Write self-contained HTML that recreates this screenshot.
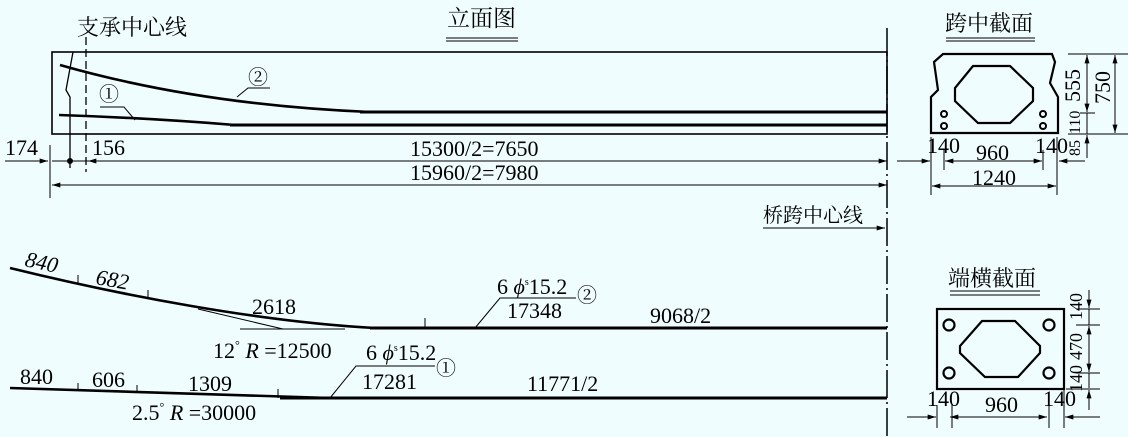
<!DOCTYPE html>
<html><head><meta charset="utf-8"><style>
html,body{margin:0;padding:0;background:#f0fdfe;}
svg{display:block}
text{font-family:"Liberation Serif","Noto Serif CJK SC",serif;fill:#000}
.cjk{font-family:"Liberation Serif","Noto Serif CJK SC",serif}
</style></head><body>
<svg width="1128" height="437" viewBox="0 0 1128 437" xmlns="http://www.w3.org/2000/svg">
<defs>
<marker id="ar" viewBox="0 0 10 6" refX="10" refY="3" markerWidth="12" markerHeight="5" orient="auto-start-reverse" markerUnits="userSpaceOnUse"><path d="M0,0 L10,3 L0,6 Z" fill="#000"/></marker>
</defs>
<g stroke="#000" fill="none">
<line x1="887" y1="28" x2="887" y2="437" stroke-width="1.5" stroke-dasharray="28,4,2,4"/>
<rect x="52" y="52" width="835" height="82" stroke-width="1.6"/>
<line x1="360" y1="112" x2="887" y2="112" stroke-width="3"/>
<line x1="230" y1="125" x2="887" y2="125" stroke-width="3"/>
<path d="M60,65 Q200,105 370,112" stroke-width="2.6"/>
<path d="M59,115 Q150,118 235,125" stroke-width="2.6"/>
<path d="M73,52 L66,90 L70,97 L70,168" stroke-width="1.3"/>
<line x1="86" y1="37" x2="86" y2="172" stroke-width="1.3" stroke-dasharray="8,4"/>
<path d="M237,97 L248,88 L270,88" stroke-width="1"/>
<path d="M100,107 L124,107 L135,120" stroke-width="1"/>
<line x1="5" y1="161" x2="48" y2="161" stroke-width="1" marker-end="url(#ar)"/>
<line x1="52" y1="161" x2="887" y2="161" stroke-width="1" marker-end="url(#ar)"/>
<line x1="100" y1="161" x2="88" y2="161" stroke-width="1" marker-end="url(#ar)"/>
<line x1="50" y1="145" x2="50" y2="198" stroke-width="1"/>
<line x1="52" y1="185" x2="887" y2="185" stroke-width="1" marker-start="url(#ar)" marker-end="url(#ar)"/>
<circle cx="70" cy="161" r="2.5" fill="#000"/>
<line x1="763" y1="228" x2="885" y2="228" stroke-width="1" marker-end="url(#ar)"/>
<line x1="446" y1="38" x2="518" y2="38" stroke-width="1"/>
<line x1="446" y1="41" x2="518" y2="41" stroke-width="1"/>
<path d="M10,268 C120,295 260,322 375,328" stroke-width="2.6"/>
<line x1="370" y1="328" x2="887" y2="328" stroke-width="3"/>
<line x1="78" y1="275" x2="78" y2="283" stroke-width="1"/>
<line x1="148" y1="290" x2="148" y2="299" stroke-width="1"/>
<line x1="425" y1="318" x2="425" y2="328" stroke-width="1"/>
<line x1="240" y1="329" x2="345" y2="329" stroke-width="1"/>
<line x1="198" y1="309" x2="283" y2="329" stroke-width="1"/>
<path d="M475,328 L500,298 L576,298" stroke-width="1"/>
<path d="M10,388 Q180,393 330,398" stroke-width="2.6"/>
<line x1="280" y1="398" x2="887" y2="398" stroke-width="3"/>
<line x1="78" y1="383" x2="78" y2="390" stroke-width="1"/>
<line x1="137" y1="385" x2="137" y2="393" stroke-width="1"/>
<line x1="278" y1="389" x2="278" y2="398" stroke-width="1"/>
<path d="M330,398 L356,366 L435,366" stroke-width="1"/>
<line x1="946" y1="38" x2="1035" y2="38" stroke-width="1"/>
<line x1="946" y1="41" x2="1035" y2="41" stroke-width="1"/>
<path d="M934,62 L943,54 L1052,54 L1055,62 L1050,83 L1058,97 L1058,133 L931,133 L931,97 L938,90 Z" stroke-width="2.2"/>
<path d="M973,66 L1010,66 L1033,88 L1033,101 L1010,123 L978,123 L955,101 L955,88 Z" stroke-width="2.2"/>
<circle cx="944" cy="114" r="3" stroke-width="2"/><circle cx="944" cy="126" r="3" stroke-width="2"/>
<circle cx="1043" cy="114" r="3" stroke-width="2"/><circle cx="1043" cy="126" r="3" stroke-width="2"/>
<line x1="1068" y1="54" x2="1128" y2="54" stroke-width="1"/>
<line x1="1068" y1="134" x2="1128" y2="134" stroke-width="1"/>
<line x1="1080" y1="113" x2="1095" y2="113" stroke-width="1"/>
<line x1="1087" y1="55" x2="1087" y2="112" stroke-width="1" marker-start="url(#ar)" marker-end="url(#ar)"/>
<line x1="1087" y1="113" x2="1087" y2="134" stroke-width="1"/>
<line x1="1087" y1="158" x2="1087" y2="135" stroke-width="1" marker-end="url(#ar)"/>
<line x1="1115" y1="55" x2="1115" y2="133" stroke-width="1" marker-start="url(#ar)" marker-end="url(#ar)"/>
<line x1="897" y1="161" x2="930" y2="161" stroke-width="1" marker-end="url(#ar)"/>
<line x1="945" y1="161" x2="1042" y2="161" stroke-width="1" marker-start="url(#ar)" marker-end="url(#ar)"/>
<line x1="1085" y1="161" x2="1059" y2="161" stroke-width="1" marker-end="url(#ar)"/>
<line x1="931" y1="137" x2="931" y2="195" stroke-width="1"/>
<line x1="944" y1="150" x2="944" y2="170" stroke-width="1"/>
<line x1="1043" y1="150" x2="1043" y2="170" stroke-width="1"/>
<line x1="1057" y1="137" x2="1057" y2="195" stroke-width="1"/>
<line x1="932" y1="186" x2="1056" y2="186" stroke-width="1" marker-start="url(#ar)" marker-end="url(#ar)"/>
<line x1="950" y1="291" x2="1040" y2="291" stroke-width="1"/>
<line x1="950" y1="295" x2="1040" y2="295" stroke-width="1"/>
<rect x="937" y="309" width="127" height="80" stroke-width="2.2"/>
<path d="M982,321 L1015,321 L1040,346 L1040,353 L1018,377 L985,377 L960,353 L960,346 Z" stroke-width="2.2"/>
<circle cx="949" cy="325" r="5.5" stroke-width="2.2"/><circle cx="1049" cy="325" r="5.5" stroke-width="2.2"/>
<circle cx="949" cy="373" r="5.5" stroke-width="2.2"/><circle cx="1049" cy="373" r="5.5" stroke-width="2.2"/>
<line x1="1089" y1="290" x2="1089" y2="308" stroke-width="1" marker-end="url(#ar)"/>
<line x1="1089" y1="309" x2="1089" y2="325" stroke-width="1"/>
<line x1="1089" y1="326" x2="1089" y2="372" stroke-width="1" marker-start="url(#ar)" marker-end="url(#ar)"/>
<line x1="1089" y1="373" x2="1089" y2="388" stroke-width="1"/>
<line x1="1089" y1="410" x2="1089" y2="390" stroke-width="1" marker-end="url(#ar)"/>
<line x1="1076" y1="309" x2="1100" y2="309" stroke-width="1"/>
<line x1="1076" y1="325" x2="1100" y2="325" stroke-width="1"/>
<line x1="1076" y1="373" x2="1100" y2="373" stroke-width="1"/>
<line x1="1066" y1="389" x2="1100" y2="389" stroke-width="1"/>
<line x1="907" y1="417" x2="936" y2="417" stroke-width="1" marker-end="url(#ar)"/>
<line x1="950" y1="417" x2="1047" y2="417" stroke-width="1" marker-start="url(#ar)" marker-end="url(#ar)"/>
<line x1="1100" y1="417" x2="1065" y2="417" stroke-width="1" marker-end="url(#ar)"/>
<line x1="937" y1="405" x2="937" y2="428" stroke-width="1"/>
<line x1="952" y1="405" x2="952" y2="428" stroke-width="1"/>
<line x1="1049" y1="405" x2="1049" y2="428" stroke-width="1"/>
<line x1="1064" y1="390" x2="1064" y2="428" stroke-width="1"/>
</g>
<g font-size="22">
<text class="cjk" x="77" y="35" font-size="22">支承中心线</text>
<text class="cjk" x="447" y="26" font-size="23">立面图</text>
<text class="cjk" x="945" y="31" font-size="22">跨中截面</text>
<text class="cjk" x="948" y="286" font-size="22">端横截面</text>
<text class="cjk" x="763" y="222" font-size="20">桥跨中心线</text>
<text x="248" y="84" font-size="20">②</text>
<text x="99" y="101" font-size="20">①</text>
<text x="5" y="155">174</text>
<text x="92" y="155">156</text>
<text x="410" y="156">15300/2=7650</text>
<text x="410" y="180">15960/2=7980</text>
<text x="24" y="266" font-style="italic" transform="rotate(12 24 266)">840</text>
<text x="95" y="284" font-style="italic" transform="rotate(10 95 284)">682</text>
<text x="252" y="314">2618</text>
<text x="213" y="358">12<tspan font-size="12" dy="-9">°</tspan><tspan dy="9" font-style="italic"> R</tspan> =12500</text>
<text x="497" y="294">6 <tspan font-style="italic">ϕ</tspan><tspan font-size="10" dy="-9">s</tspan><tspan dy="9">15.2</tspan></text>
<text x="577" y="302" font-size="20">②</text>
<text x="507" y="318">17348</text>
<text x="650" y="323">9068/2</text>
<text x="20" y="384">840</text>
<text x="92" y="387">606</text>
<text x="188" y="391">1309</text>
<text x="132" y="420">2.5<tspan font-size="12" dy="-9">°</tspan><tspan dy="9" font-style="italic"> R</tspan> =30000</text>
<text x="366" y="360">6 <tspan font-style="italic">ϕ</tspan><tspan font-size="10" dy="-9">s</tspan><tspan dy="9">15.2</tspan></text>
<text x="436" y="375" font-size="20">①</text>
<text x="362" y="389">17281</text>
<text x="527" y="391">11771/2</text>
<text x="927" y="153">140</text>
<text x="976" y="160">960</text>
<text x="1035" y="153">140</text>
<text x="972" y="185">1240</text>
<text x="1080" y="102" transform="rotate(-90 1080 102)">555</text>
<text x="1110" y="104" transform="rotate(-90 1110 104)">750</text>
<text x="1080" y="134" font-size="16" transform="rotate(-90 1080 134)">110</text>
<text x="1080" y="156" font-size="16" transform="rotate(-90 1080 156)">85</text>
<text x="1082" y="320" font-size="18" transform="rotate(-90 1082 320)">140</text>
<text x="1082" y="360" font-size="18" transform="rotate(-90 1082 360)">470</text>
<text x="1082" y="392" font-size="18" transform="rotate(-90 1082 392)">140</text>
<text x="927" y="406">140</text>
<text x="985" y="412">960</text>
<text x="1043" y="406">140</text>
</g>
</svg>
</body></html>
